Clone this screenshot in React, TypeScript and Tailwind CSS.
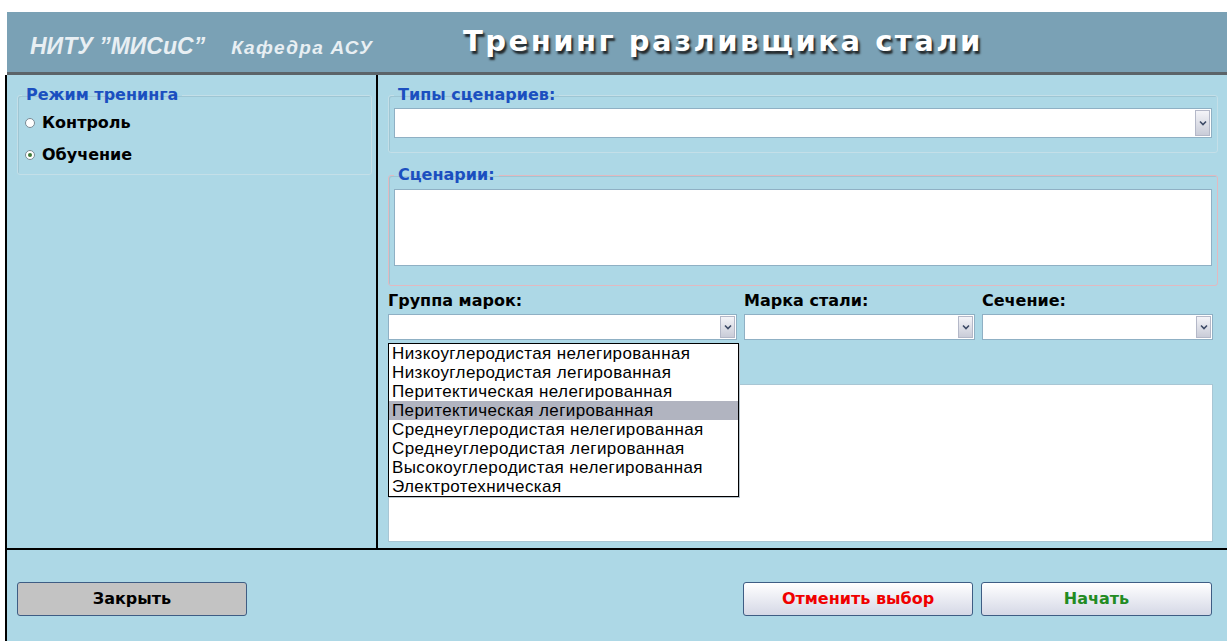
import React from "react";

const groups = [
  "Низкоуглеродистая нелегированная",
  "Низкоуглеродистая легированная",
  "Перитектическая нелегированная",
  "Перитектическая легированная",
  "Среднеуглеродистая нелегированная",
  "Среднеуглеродистая легированная",
  "Высокоуглеродистая нелегированная",
  "Электротехническая",
];

const ArrowButton = () => (
  <div className="flex h-full w-[15px] items-center justify-center border border-[#b4b8c8] bg-gradient-to-b from-[#f4f4f8] to-[#c9ccd8]">
    <svg width="8" height="6" viewBox="0 0 8 6">
      <path d="M1 1.5 L4 4.5 L7 1.5" fill="none" stroke="#3d4a66" strokeWidth="1.6" />
    </svg>
  </div>
);

const Select = ({ className }: { className: string }) => (
  <div className={`flex justify-end border border-[#8fb0c4] bg-white p-[1px] ${className}`}>
    <ArrowButton />
  </div>
);

const Radio = ({ label, checked }: { label: string; checked?: boolean }) => (
  <label className="flex items-center gap-[7px] pl-[3px] text-[16px] font-bold leading-[20px] text-black">
    <span className="flex h-[10px] w-[10px] items-center justify-center rounded-full border border-[#7a8a94] bg-white">
      {checked && <span className="h-[4px] w-[4px] rounded-full bg-[#3f7a3a]" />}
    </span>
    {label}
  </label>
);

const legend = "px-[4px] text-[16px] font-bold leading-[18px] text-[#1b4fc0]";

const App = () => {
  return (
    <div className="h-[641px] w-[1227px] overflow-hidden bg-white pt-[12px] font-['DejaVu_Sans',sans-serif]">
      {/* шапка */}
      <header className="ml-[7px] flex h-[63px] items-center border-b-[3px] border-[#5b6469] bg-[#7aa1b5]">
        <div className="flex w-[456px] items-baseline pl-[23px] pt-[8px] font-['Liberation_Sans',sans-serif] font-bold italic text-[#e8eff3]">
          <span className="text-[23px]">НИТУ ”МИСиС”</span>
          <span className="ml-[26px] text-[19px] tracking-[1.3px]">Кафедра АСУ</span>
        </div>
        <h1 className="text-[29px] font-bold tracking-[2.5px] text-white [text-shadow:2px_3px_2px_rgba(20,20,20,0.85)]">
          Тренинг разливщика стали
        </h1>
      </header>

      <main className="ml-[5px] flex h-[566px] flex-col border-l-2 border-black bg-[#add8e6]">
        <div className="flex h-[475px] border-b-2 border-black">
          {/* режим */}
          <section className="w-[371px] border-r-2 border-black pl-[10px] pr-[4px] pt-[11px]">
            <fieldset className="rounded-[3px] border border-[#c4dfe8] px-[4px] pb-[9px] shadow-[inset_1px_1px_0_#9ec6d4]">
              <legend className={legend}>Режим тренинга</legend>
              <div className="flex flex-col gap-[12px] pt-[9px]">
                <Radio label="Контроль" />
                <Radio label="Обучение" checked />
              </div>
            </fieldset>
          </section>

          {/* сценарии и марки */}
          <section className="relative flex flex-1 flex-col pl-[10px] pr-[9px] pt-[11px]">
            <fieldset className="rounded-[3px] border border-[#c4dfe8] px-[5px] pb-[14px] shadow-[inset_1px_1px_0_#9ec6d4]">
              <legend className={legend}>Типы сценариев:</legend>
              <Select className="mt-[4px] h-[30px]" />
            </fieldset>

            <fieldset className="mt-[13px] rounded-[3px] border border-[#e2b9c0] px-[5px] pb-[19px] shadow-[inset_1px_1px_0_#9ec6d4]">
              <legend className={legend}>Сценарии:</legend>
              <div className="mt-[5px] h-[77px] border border-[#8fb0c4] bg-white" />
            </fieldset>

            <div className="mt-[6px] mr-[5px] grid grid-cols-[349px_231px_231px] gap-x-[7px] text-[16px] font-bold leading-[18px] text-black">
              <span>Группа марок:</span>
              <span>Марка стали:</span>
              <span>Сечение:</span>
              <Select className="mt-[4px] h-[26px]" />
              <Select className="mt-[4px] h-[26px]" />
              <Select className="mt-[4px] h-[26px]" />
            </div>

            <div className="mt-[44px] mr-[5px] h-[158px] border border-[#a8c6d4] bg-white" />

            {/* раскрытый список групп */}
            <ul className="absolute left-[10px] top-[268px] w-[351px] border border-black bg-white font-['Liberation_Sans',sans-serif] text-[17px] tracking-[0.4px] text-black shadow-[1px_1px_0_#b8c4cc]">
              {groups.map((g, i) => (
                <li key={g} className={`h-[19px] pl-[3px] leading-[19px] ${i === 3 ? "bg-[#b1b4c0]" : ""}`}>
                  {g}
                </li>
              ))}
            </ul>
          </section>
        </div>

        {/* кнопки */}
        <div className="flex pt-[32px] text-[16px] font-bold">
          <button className="ml-[10px] h-[34px] w-[230px] rounded-[3px] border border-[#3e5d84] bg-[#c3c3c3] text-black">
            Закрыть
          </button>
          <div className="ml-auto mr-[15px] flex gap-[8px]">
            <button className="h-[34px] w-[230px] rounded-[3px] border border-[#3e5d84] bg-gradient-to-b from-white to-[#d5d8e6] text-[#f00000]">
              Отменить выбор
            </button>
            <button className="h-[34px] w-[231px] rounded-[3px] border border-[#3e5d84] bg-gradient-to-b from-white to-[#d5d8e6] text-[#228b22]">
              Начать
            </button>
          </div>
        </div>
      </main>
    </div>
  );
};

export default App;
